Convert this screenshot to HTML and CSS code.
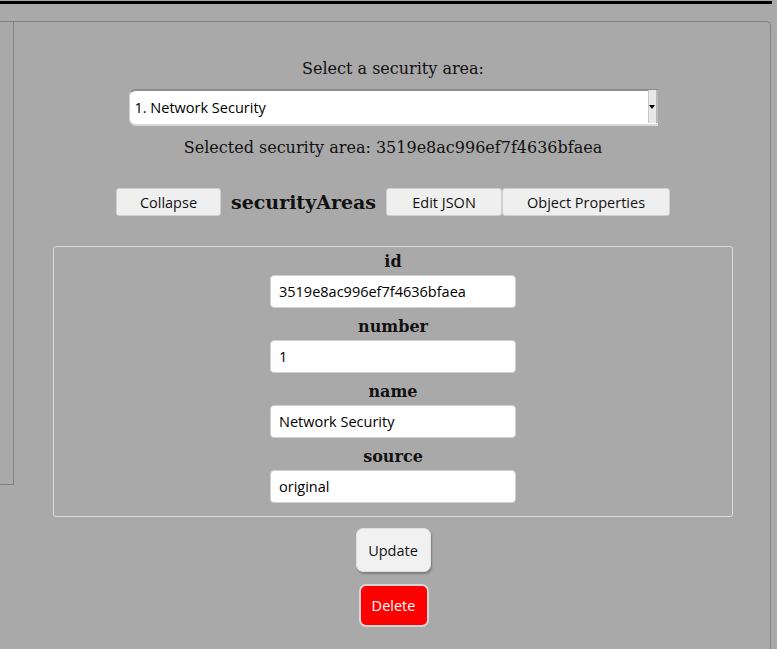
FILE: index.html
```html
<!DOCTYPE html>
<html>
<head>
<meta charset="utf-8">
<link rel="stylesheet" href="styles.css">
</head>
<body>
<div class="topline"></div>
<div class="layout">
  <div class="sidebar"></div>
  <div class="main">
    <div class="select-label">Select a security area:</div>
    <div class="select">
      <span class="select-text">1. Network Security</span>
      <span class="select-arrow"><span class="tri"></span></span>
    </div>
    <div class="selected">Selected security area: 3519e8ac996ef7f4636bfaea</div>
    <div class="toolbar">
      <button class="btn btn-collapse">Collapse</button>
      <span class="title">securityAreas</span>
      <button class="btn btn-json">Edit JSON</button>
      <button class="btn btn-props">Object Properties</button>
    </div>
    <div class="fields">
      <div class="field">
        <div class="field-label">id</div>
        <input class="field-input" type="text" value="3519e8ac996ef7f4636bfaea">
      </div>
      <div class="field">
        <div class="field-label">number</div>
        <input class="field-input" type="text" value="1">
      </div>
      <div class="field">
        <div class="field-label">name</div>
        <input class="field-input" type="text" value="Network Security">
      </div>
      <div class="field">
        <div class="field-label">source</div>
        <input class="field-input" type="text" value="original">
      </div>
    </div>
    <div class="actions">
      <button class="act act-update">Update</button>
      <button class="act act-delete">Delete</button>
    </div>
  </div>
</div>
</body>
</html>
```
FILE: styles.css
```css
html, body {
  margin: 0;
  padding: 0;
  background: #a9a9a9;
  height: 100%;
  overflow: hidden;
}
body {
  font-family: "DejaVu Serif", serif;
  color: #111;
}
.topline {
  width: 772px;
  height: 3px;
  margin-top: 1px;
  background: #000;
}
.layout {
  display: flex;
  align-items: flex-start;
  margin-top: 17px;
}
.sidebar {
  width: 14px;
  height: 462px;
  border-top: 1px solid #808080;
  border-right: 1px solid #808080;
  border-bottom: 1px solid #808080;
  box-sizing: content-box;
  margin-left: -1px;
}
.main {
  width: 754px;
  padding-left: 2px;
  height: 630px;
  border-top: 1px solid #808080;
  border-right: 1px solid #808080;
  border-top-right-radius: 5px;
  display: flex;
  flex-direction: column;
  align-items: center;
}
.select-label {
  font-size: 16px;
  margin-top: 37px;
  line-height: 20px;
}
.select {
  margin-top: 10px;
  width: 529px;
  height: 37px;
  box-sizing: border-box;
  background: #fff;
  border-top: 2px solid #8c8c8c;
  border-left: 1px solid #d0d0d0;
  border-bottom: 2px solid #d8d8d8;
  border-radius: 7px 0 0 7px;
  display: flex;
  align-items: center;
  justify-content: space-between;
  font-family: "Open Sans", "DejaVu Sans", sans-serif;
  font-size: 14.5px;
  color: #000;
}
.select-text {
  padding-left: 5px;
}
.select-arrow {
  width: 10px;
  height: 33px;
  margin-top: -2px;
  box-sizing: border-box;
  background: #e8e8e8;
  border-left: 1px solid #c8c8c8;
  border-right: 2px solid #b8b8b8;
  display: flex;
  align-items: center;
  justify-content: center;
}
.tri {
  width: 0;
  height: 0;
  border-left: 3px solid transparent;
  border-right: 3px solid transparent;
  border-top: 4px solid #000;
}
.selected {
  margin-top: 11px;
  font-size: 16px;
  line-height: 22px;
}
.toolbar {
  margin-top: 29px;
  display: flex;
  align-items: center;
}
.btn {
  height: 28px;
  box-sizing: border-box;
  background: #efefef;
  border: 1px solid #cfcfcf;
  border-radius: 3px;
  font-family: "Open Sans", "DejaVu Sans", sans-serif;
  font-size: 14.5px;
  color: #111;
  padding: 0;
}
.btn-collapse { width: 105px; }
.btn-json { width: 116px; }
.btn-props { width: 168px; }
.title {
  font-weight: bold;
  font-size: 19px;
  margin: 0 10px 0 10px;
}
.fields {
  margin-top: 30px;
  width: 680px;
  height: 271px;
  box-sizing: border-box;
  border: 1px solid #dcdcdc;
  border-radius: 3px;
  display: flex;
  flex-direction: column;
  align-items: center;
  padding-top: 4px;
  gap: 1px;
}
.field {
  display: flex;
  flex-direction: column;
  align-items: center;
  height: 64px;
}
.field-label {
  font-weight: bold;
  font-size: 16px;
  line-height: 22px;
  margin-bottom: 2px;
}
.field-input {
  width: 246px;
  height: 33px;
  box-sizing: border-box;
  border: 1px solid #cfcfcf;
  border-radius: 4px;
  background: #fff;
  font-family: "Open Sans", "DejaVu Sans", sans-serif;
  font-size: 14.5px;
  color: #000;
  padding: 0 8px;
  margin: 0;
}
.actions {
  display: flex;
  flex-direction: column;
  align-items: center;
  margin-top: 11px;
  gap: 12px;
}
.act {
  height: 44px;
  box-sizing: border-box;
  border-radius: 7px;
  font-family: "Open Sans", "DejaVu Sans", sans-serif;
  font-size: 14.5px;
  padding: 0;
}
.act-update {
  width: 75px;
  background: #f1f1f1;
  color: #111;
  border: 1px solid #e0e0e0;
  box-shadow: 1px 2px 2px rgba(0,0,0,0.25);
}
.act-delete {
  width: 70px;
  height: 43px;
  background: #ff0000;
  color: #fff;
  border: 2px solid #d6d6d6;
  margin-left: 1px;
}
```
